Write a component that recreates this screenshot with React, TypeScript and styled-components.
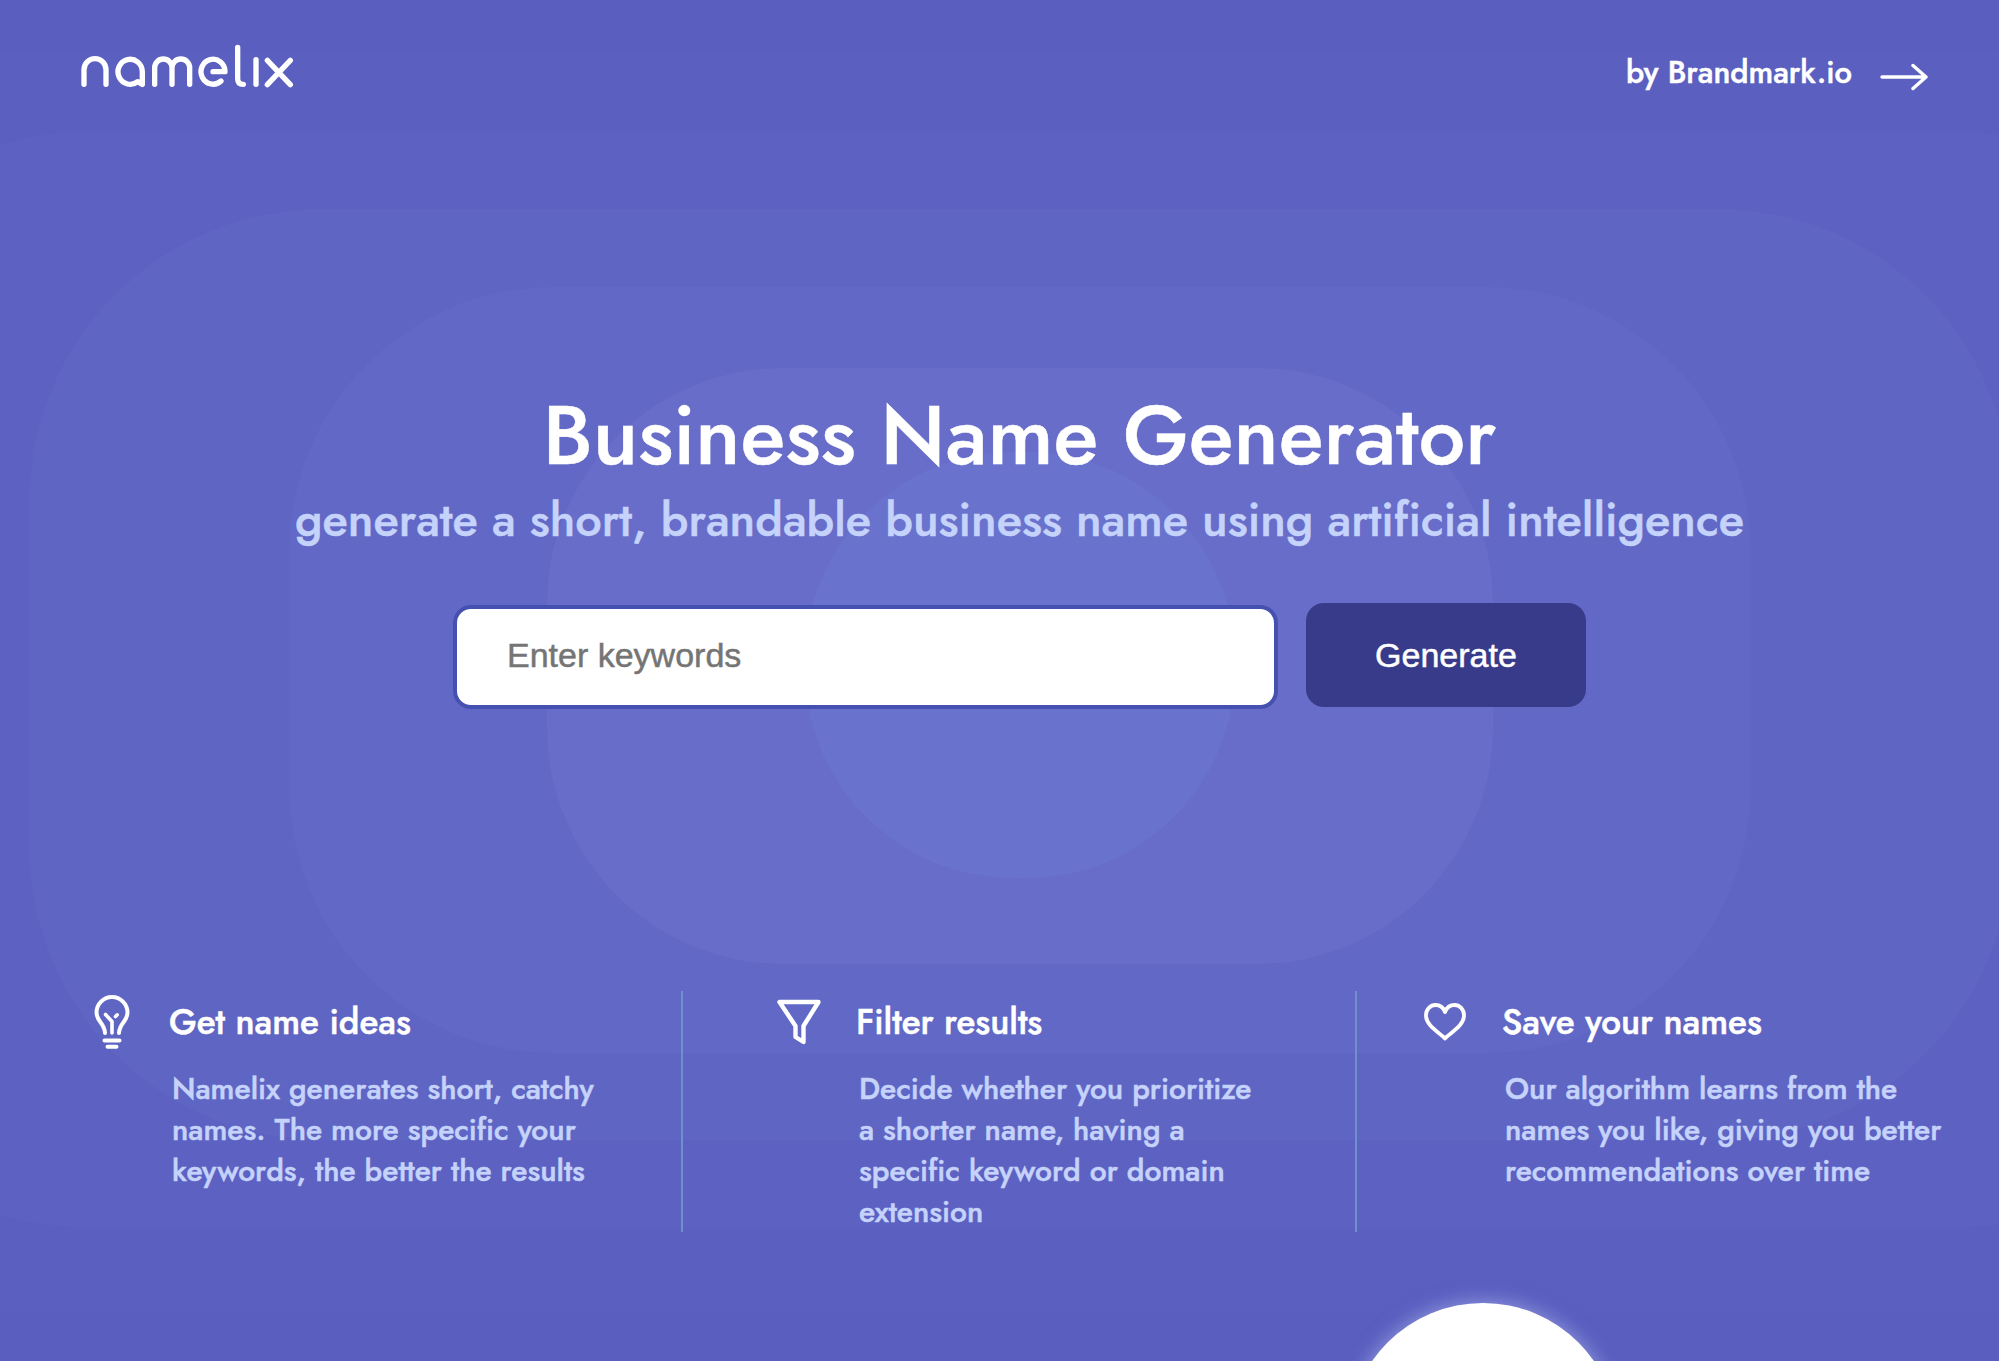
import React from "react";
import styled, { createGlobalStyle } from "styled-components";

const GlobalStyle = createGlobalStyle`
  *, *::before, *::after { box-sizing: border-box; }
  body {
    margin: 0;
    background: #595ebf;
    color: #ffffff;
    font-family: Jost, Lato, "Open Sans", sans-serif;
    font-weight: 500;
    -webkit-text-stroke: 0.5px currentColor;
  }
`;

const Page = styled.div`
  position: relative;
  display: flex;
  flex-direction: column;
  min-height: 100vh;
  overflow: hidden;
  isolation: isolate;
`;

const Header = styled.header`
  display: flex;
  justify-content: space-between;
  align-items: flex-start;
  padding: 44px 71px 0 81px;
`;

const HomeLink = styled.a`
  display: block;
  color: inherit;
  line-height: 0;
`;

const BrandLink = styled.a`
  display: flex;
  align-items: center;
  gap: 28px;
  margin-top: 9px;
  color: inherit;
  font-size: 31px;
  line-height: 40px;
  text-decoration: none;
`;

const Hero = styled.main`
  position: relative;
  display: flex;
  flex-direction: column;
  align-items: center;
  padding: 294px 0 282px 40px;
`;

const Ring = styled.div<{ $w: number; $h: number; $y: number; $r: number; $tone: string }>`
  position: absolute;
  z-index: -1;
  top: ${(p) => p.$y}px;
  left: calc(50% + 20px);
  width: ${(p) => p.$w}px;
  height: ${(p) => p.$h}px;
  border-radius: ${(p) => p.$r}px;
  background: ${(p) => p.$tone};
  transform: translateX(-50%);
`;

const Title = styled.h1`
  margin: 0;
  font-size: 83px;
  font-weight: 500;
  line-height: 96px;
`;

const Subtitle = styled.h2`
  margin: 9px 0 55px;
  color: #c5d3fb;
  font-size: 47px;
  font-weight: 500;
  line-height: 56px;
`;

const SearchForm = styled.form`
  display: flex;
  align-items: flex-start;
  gap: 28px;
`;

const KeywordInput = styled.input`
  width: 825px;
  height: 104px;
  margin-top: 2px;
  padding: 0 50px 4px;
  border: 4px solid #4451b1;
  border-radius: 18px;
  background: #ffffff;
  color: #333333;
  font: 400 34px/40px "Liberation Sans", Arial, sans-serif;
  outline: none;

  &::placeholder { color: #757575; opacity: 1; }
`;

const GenerateButton = styled.button`
  width: 280px;
  height: 104px;
  padding: 0;
  border: 0;
  border-radius: 18px;
  background: #383a8a;
  color: #ffffff;
  font: 400 34px/40px "Liberation Sans", Arial, sans-serif;
  cursor: pointer;
`;

const Features = styled.section`
  display: grid;
  grid-template-columns: 681fr 674fr 644fr;
`;

const Feature = styled.article<{ $inset: number; $divided?: boolean }>`
  padding-left: ${(p) => p.$inset}px;
  border-left: ${(p) => (p.$divided ? "2px solid #7090cc" : "0")};
`;

const FeatureHead = styled.div`
  display: flex;
  align-items: center;
  gap: 33px;
  height: 62px;
`;

const IconSlot = styled.span`
  display: flex;
  flex: none;
  justify-content: center;
  width: 48px;
`;

const FeatureTitle = styled.h3`
  margin: 0;
  font-size: 35px;
  font-weight: 500;
  line-height: 40px;
`;

const FeatureText = styled.p`
  margin: 15px 0 0;
  padding-left: 84px;
  color: #c5d3fb;
  font-size: 30px;
  line-height: 41px;
  white-space: pre-line;
`;

const Backdrop = styled.div`
  position: relative;
  flex: 1;
  min-height: 129px;
`;

const Disc = styled.div`
  position: absolute;
  top: 71px;
  left: 74.2%;
  width: 270px;
  height: 270px;
  border-radius: 50%;
  background: #ffffff;
  box-shadow: 0 0 20px rgba(214, 222, 255, 0.5);
  transform: translateX(-50%);
`;

const Logo = () => (
  <svg width="213" height="44" viewBox="63 42 639 132" fill="none" stroke="currentColor" strokeWidth="16" strokeLinecap="round" strokeLinejoin="round" role="img" aria-label="namelix">
    <path d="M72 163V119a33 33 0 0 1 66 0V163" />
    <path d="M247 163V125a36.500 37.500 0 1 0-14 30L247 163" />
    <path d="M284 163V113a26 26 0 0 1 52 0V163M336 113a26.500 26 0 0 1 53 0V163" />
    <path d="M459 125H495a36 37.500 0 1 0-12 28" />
    <path d="M533 52V146q0 17 17 17" />
    <path d="M588 89V163" />
    <path d="M622 91L691 164M691 91L622 164" />
  </svg>
);

const Arrow = () => (
  <svg width="48" height="36" viewBox="0 0 48 36" fill="none" stroke="currentColor" strokeWidth="3.400" strokeLinecap="round" strokeLinejoin="round" aria-hidden="true">
    <path d="M2 22H46M33 10.500L46 22L33 33.500" />
  </svg>
);

const Bulb = () => (
  <svg width="36" height="56" viewBox="0 0 36 56" fill="none" stroke="currentColor" strokeWidth="4" strokeLinecap="round" strokeLinejoin="round" aria-hidden="true">
    <path d="M11 39C10.500 29 2.500 27.500 2.500 18.500a15.500 15.500 0 0 1 31 0C33.500 27.500 25.500 29 25 39" />
    <path d="M18 39V27.500L11.500 20.500M21.500 22.500L23.200 20.800" strokeWidth="3.600" />
    <path d="M10.500 46.500H25.500M13.500 52.800H22.500" />
  </svg>
);

const Funnel = () => (
  <svg width="44" height="46" viewBox="0 0 44 46" fill="none" stroke="currentColor" strokeWidth="4.400" strokeLinejoin="round" aria-hidden="true">
    <path d="M2.500 3H41.500L26.500 27V43L18.500 38V27Z" />
  </svg>
);

const Heart = () => (
  <svg width="42" height="38" viewBox="0 0 42 38" fill="none" stroke="currentColor" strokeWidth="3.800" strokeLinejoin="round" aria-hidden="true">
    <path d="M21 35.500C16 30 2 23 2 12.500C2 6 6.500 2 11.500 2C16 2 19.500 5 21 9C22.500 5 26 2 30.500 2C35.500 2 40 6 40 12.500C40 23 26 30 21 35.500Z" />
  </svg>
);

const rings = [
  { $w: 3020, $h: 1261, $y: -41, $r: 350, $tone: "#5a5fc0" },
  { $w: 2500, $h: 1097, $y: 38, $r: 320, $tone: "#5c61c2" },
  { $w: 1981, $h: 931, $y: 116, $r: 292, $tone: "#5f65c3" },
  { $w: 1461, $h: 766, $y: 194, $r: 264, $tone: "#6168c6" },
  { $w: 946, $h: 596, $y: 275, $r: 236, $tone: "#676dc8" },
  { $w: 430, $h: 426, $y: 359, $r: 208, $tone: "#6972cc" },
];

const features = [
  { icon: <Bulb />, inset: 88, title: "Get name ideas", text: "Namelix generates short, catchy\nnames. The more specific your\nkeywords, the better the results" },
  { icon: <Funnel />, inset: 92, title: "Filter results", text: "Decide whether you prioritize\na shorter name, having a\nspecific keyword or domain\nextension" },
  { icon: <Heart />, inset: 64, title: "Save your names", text: "Our algorithm learns from the\nnames you like, giving you better\nrecommendations over time" },
];

export default function App() {
  return (
    <>
      <GlobalStyle />
      <Page>
        <Header>
          <HomeLink href="#"><Logo /></HomeLink>
          <BrandLink href="#brandmark">by Brandmark.io<Arrow /></BrandLink>
        </Header>
        <Hero>
          {rings.map((ring) => <Ring key={ring.$w} {...ring} />)}
          <Title>Business Name Generator</Title>
          <Subtitle>generate a short, brandable business name using artificial intelligence</Subtitle>
          <SearchForm onSubmit={(e) => e.preventDefault()}>
            <KeywordInput type="text" aria-label="Enter keywords" placeholder="Enter keywords" />
            <GenerateButton type="submit">Generate</GenerateButton>
          </SearchForm>
        </Hero>
        <Features>
          {features.map((f, i) => (
            <Feature key={f.title} $inset={f.inset} $divided={i > 0}>
              <FeatureHead>
                <IconSlot>{f.icon}</IconSlot>
                <FeatureTitle>{f.title}</FeatureTitle>
              </FeatureHead>
              <FeatureText>{f.text}</FeatureText>
            </Feature>
          ))}
        </Features>
        <Backdrop><Disc /></Backdrop>
      </Page>
    </>
  );
}
